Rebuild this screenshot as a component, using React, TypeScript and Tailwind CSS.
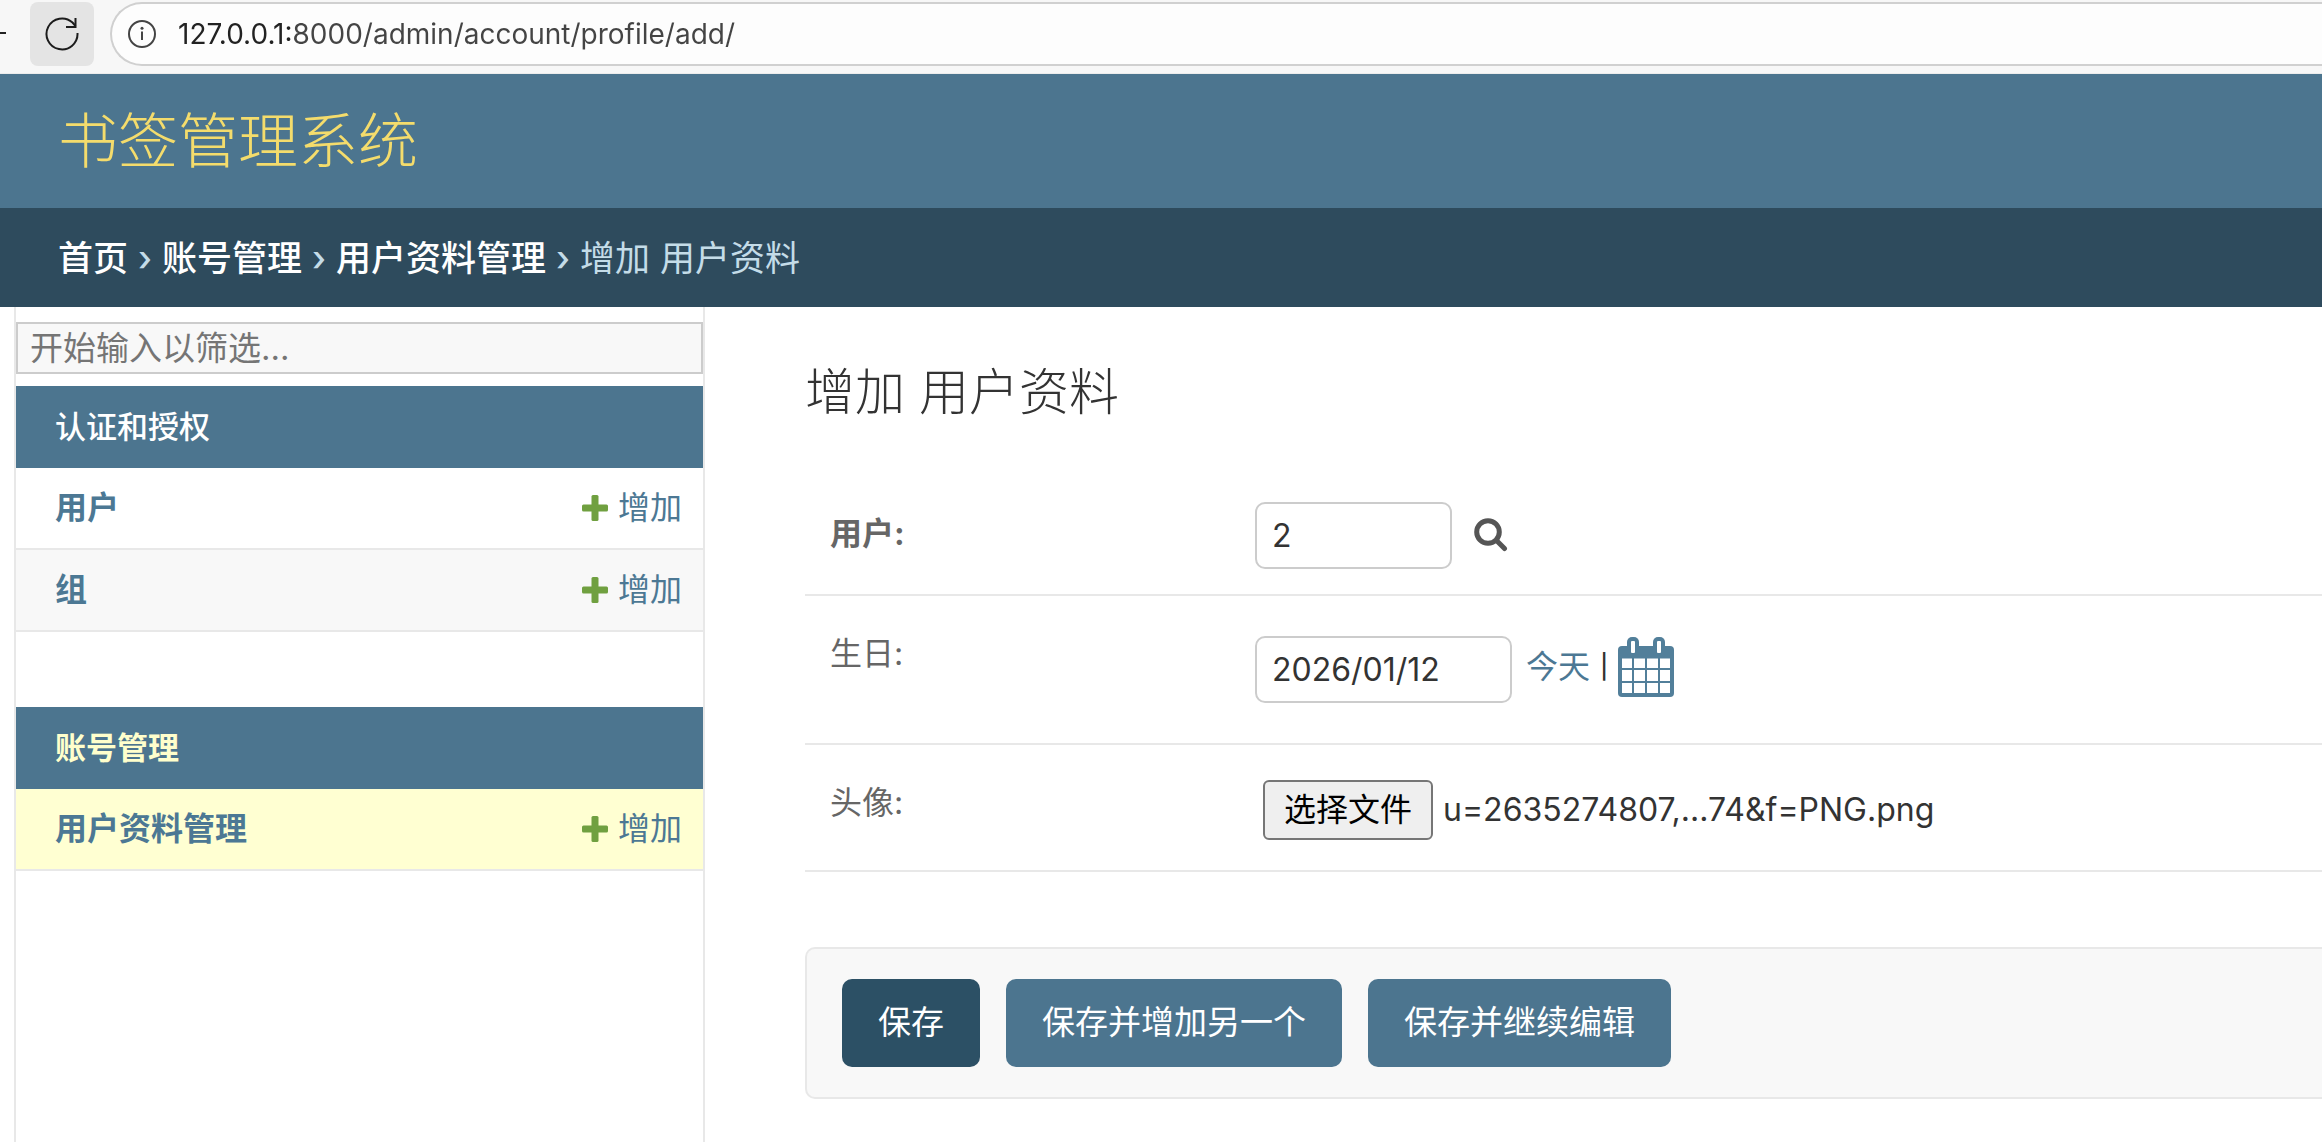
import type { ReactNode } from "react";

type ModelLink = { name: string; current?: boolean };

const groups: { title: string; current?: boolean; models: ModelLink[] }[] = [
  { title: "认证和授权", models: [{ name: "用户" }, { name: "组" }] },
  { title: "账号管理", current: true, models: [{ name: "用户资料管理", current: true }] },
];

const crumbs = ["首页", "账号管理", "用户资料管理"];

function PlusIcon() {
  return (
    <svg viewBox="0 0 26 26" className="size-[26px] fill-[#70a040]" aria-hidden="true">
      <rect x="9.500" y="0" width="7" height="26" rx="1.500" />
      <rect x="0" y="9.500" width="26" height="7" rx="1.500" />
    </svg>
  );
}

function SearchIcon() {
  return (
    <svg viewBox="0 0 34 34" className="size-[34px]" fill="none" stroke="#555" aria-hidden="true">
      <circle cx="14" cy="14" r="11.300" strokeWidth="5" />
      <path d="M22.500 22.500l8 8" strokeWidth="5" strokeLinecap="round" />
    </svg>
  );
}

const calendarColumns = [
  { x: 4, width: 10 },
  { x: 16, width: 11 },
  { x: 29, width: 11 },
  { x: 42, width: 10 },
];
const calendarRows = [
  { y: 21.5, height: 9.5 },
  { y: 33, height: 11 },
  { y: 46, height: 10 },
];

function CalendarIcon() {
  return (
    <svg viewBox="0 0 56 60" className="h-[60px] w-14" aria-hidden="true">
      <g fill="#527f9a">
        <rect x="0" y="9" width="56" height="51" rx="4" />
        <rect x="9" y="0" width="12" height="22" rx="5" />
        <rect x="35" y="0" width="12" height="22" rx="5" />
      </g>
      <g fill="#fff">
        <rect x="13" y="4" width="4" height="12" rx="1" />
        <rect x="39" y="4" width="4" height="12" rx="1" />
        {calendarRows.map((row) =>
          calendarColumns.map((col) => <rect key={`${col.x}-${row.y}`} {...col} {...row} />),
        )}
      </g>
    </svg>
  );
}

function BrowserBar() {
  return (
    <div className="flex h-[74px] items-start border-b border-[#ececec] bg-[#f7f7f7] pt-0.5">
      <svg viewBox="0 0 6 64" className="h-16 w-1.5" aria-hidden="true">
        <path d="M0 31h6" stroke="#222" strokeWidth="2" />
      </svg>
      <button type="button" aria-label="刷新" className="ml-6 flex size-16 items-center justify-center rounded-lg bg-[#e4e4e4]">
        <svg viewBox="0 0 34 34" className="size-[34px]" fill="none" stroke="#1c1c1c" strokeWidth="2" aria-hidden="true">
          <path d="M32.500 16a15.500 15.500 0 1 1-5-10.500L30.500 9" />
          <path d="M30.500 1v9H21" />
        </svg>
      </button>
      <div className="ml-4 flex h-16 flex-1 items-center gap-[21px] rounded-l-full border-2 border-r-0 border-[#d0d0d0] bg-[#fdfdfd] pl-[15px]">
        <svg viewBox="0 0 30 30" className="size-[30px]" fill="none" stroke="#444" strokeWidth="2" aria-hidden="true">
          <circle cx="15" cy="15" r="13" />
          <path d="M15 12.500v8.500" />
          <circle cx="15" cy="9.200" r="1.500" fill="#444" stroke="none" />
        </svg>
        <input
          type="text"
          aria-label="地址栏"
          defaultValue="127.0.0.1:8000/admin/account/profile/add/"
          className="min-w-0 flex-1 bg-[linear-gradient(to_right,#222_117px,#444_117px)] bg-clip-text text-[28px] leading-10 text-transparent outline-none"
        />
      </div>
    </div>
  );
}

function Sidebar() {
  return (
    <nav aria-label="侧边栏" className="ml-3.5 w-[691px] shrink-0 border-x-2 border-[#e8e8e8] pt-[15px]">
      <input
        type="search"
        aria-label="筛选导航项"
        placeholder="开始输入以筛选..."
        className="block h-[52px] w-full border-2 border-[#ccc] bg-[#f8f8f8] px-3 text-[33px] leading-10 outline-none placeholder:text-[#757575]"
      />
      <div className="mt-3 flex flex-col gap-[75px]">
        {groups.map((group) => (
          <section key={group.title}>
            <h2 className="bg-[#4c758f] px-[39px] py-[21px] text-[31px] leading-10">
              <a href="#" className={group.current ? "font-bold text-[#ffffcc]" : "font-medium text-white"}>
                {group.title}
              </a>
            </h2>
            <ul>
              {group.models.map((model) => (
                <li
                  key={model.name}
                  className={`flex items-center justify-between border-b-2 border-[#e8e8e8] py-5 pr-[21px] pl-[39px] text-[32px] leading-10 text-[#4c7894] ${
                    model.current ? "bg-[#ffffd2]" : "even:bg-[#f8f8f8]"
                  }`}
                >
                  <a href="#" className="font-bold">{model.name}</a>
                  <a href="#" className="flex items-center gap-2.5">
                    <PlusIcon />
                    增加
                  </a>
                </li>
              ))}
            </ul>
          </section>
        ))}
      </div>
    </nav>
  );
}

function Row({ label, htmlFor, bold, className, children }: { label: string; htmlFor: string; bold?: boolean; className: string; children: ReactNode }) {
  return (
    <div className={`flex items-start border-b-2 border-[#e8e8e8] pl-[25px] ${className}`}>
      <label htmlFor={htmlFor} className={`w-[425px] shrink-0 text-[32px] leading-10 text-[#666] ${bold ? "pt-3 font-bold" : "pt-[3px]"}`}>
        {label}
      </label>
      {children}
    </div>
  );
}

const field = "h-[67px] rounded-[10px] border-2 border-[#ccc] bg-white px-[15px] text-[32px] text-[#333] outline-none";
const submit = "h-[88px] rounded-[10px] px-9 text-[33px] text-white";

export default function App() {
  return (
    <div className="flex min-h-screen flex-col overflow-x-hidden bg-white font-[Inter,'Noto_Sans_CJK_SC',sans-serif] text-[#333]">
      <BrowserBar />
      <header className="flex h-[134px] items-center bg-[#4c758f] px-[58px]">
        <h1 className="text-[60px] leading-none font-light text-[#f4dc6c]">
          <a href="#">书签管理系统</a>
        </h1>
      </header>
      <nav aria-label="面包屑" className="flex h-[99px] items-center gap-2.5 bg-[#2e4b5d] px-[58px] text-[35px] leading-10 text-[#c4dce8]">
        {crumbs.map((crumb) => (
          <span key={crumb} className="flex gap-2.5 font-medium">
            <a href="#" className="text-white">{crumb}</a>
            <span>›</span>
          </span>
        ))}
        <span>增加 用户资料</span>
      </nav>
      <div className="flex flex-1">
        <Sidebar />
        <main className="min-w-0 flex-1 pt-[55px] pl-[100px]">
          <h2 className="text-[50px] leading-[60px] font-light">增加 用户资料</h2>
          <form onSubmit={(e) => e.preventDefault()}>
            <Row label="用户:" htmlFor="user" bold className="mt-[55px] pt-[25px] pb-[25px]">
              <input id="user" type="text" defaultValue="2" className={`w-[197px] ${field}`} />
              <button type="button" aria-label="查找" className="mt-4 ml-[22px]">
                <SearchIcon />
              </button>
            </Row>
            <Row label="生日:" htmlFor="birthday" className="pt-[35px] pb-10">
              <div className="flex items-start pt-[5px] text-[32px] leading-[62px]">
                <input id="birthday" type="text" defaultValue="2026/01/12" className={`w-[257px] ${field}`} />
                <a href="#" className="ml-3.5 text-[#4c7894]">今天</a>
                <span className="mx-2.5 text-2xl leading-[62px] font-medium">|</span>
                <button type="button" aria-label="选择日期" className="pt-px">
                  <CalendarIcon />
                </button>
              </div>
            </Row>
            <Row label="头像:" htmlFor="avatar" className="pt-[35px] pb-[30px]">
              <input id="avatar" type="file" className="peer sr-only" />
              <label htmlFor="avatar" className="ml-2 h-[60px] rounded-md border-2 border-[#767676] bg-[#efefef] px-[19px] text-[32px] leading-[56px] text-black">
                选择文件
              </label>
              <span className="ml-2.5 text-[32px] leading-[60px]">u=2635274807,...74&amp;f=PNG.png</span>
            </Row>
            <div className="mt-[75px] flex gap-[26px] rounded-l-[10px] border-2 border-r-0 border-[#e8e8e8] bg-[#f8f8f8] py-[30px] pl-[35px]">
              <button type="submit" className={`bg-[#2c5065] ${submit}`}>保存</button>
              <button type="submit" className={`bg-[#4c758f] ${submit}`}>保存并增加另一个</button>
              <button type="submit" className={`bg-[#4c758f] ${submit}`}>保存并继续编辑</button>
            </div>
          </form>
        </main>
      </div>
    </div>
  );
}
